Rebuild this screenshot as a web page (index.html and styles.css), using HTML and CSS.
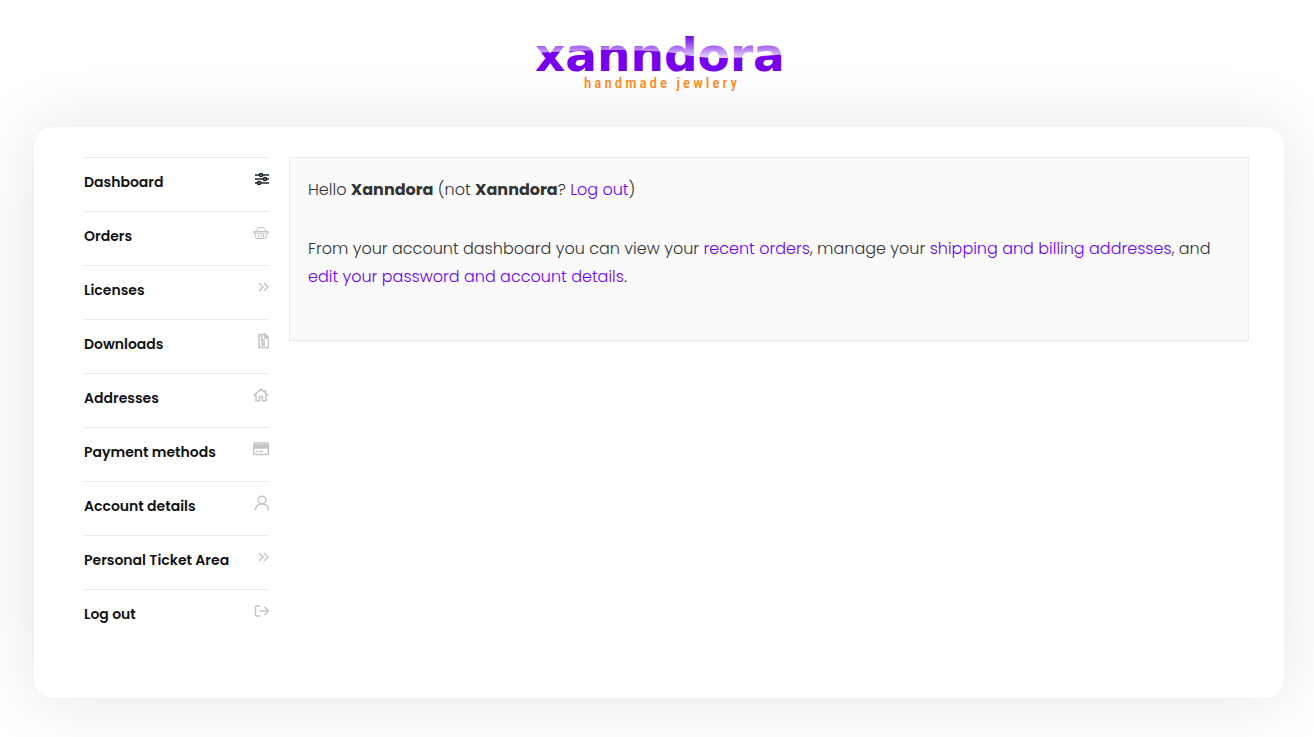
FILE: index.html
```html
<!DOCTYPE html>
<html lang="en">
<head>
    <meta charset="UTF-8">
    <meta name="viewport" content="width=device-width, initial-scale=1.0">
    <title>My account - Xanndora</title>
    <link rel="stylesheet" href="styles.css">
</head>
<body>
    <header class="site-header">
        <a href="#" class="logo" aria-label="Xanndora handmade jewlery">
            <svg width="270" height="70" viewBox="-10 -10 270 70">
                <defs>
                    <linearGradient id="gloss" gradientUnits="userSpaceOnUse" x1="0" y1="2" x2="0" y2="25">
                        <stop offset="0" stop-color="#7600ec"/>
                        <stop offset="0.35" stop-color="#9544f0"/>
                        <stop offset="1" stop-color="#ead8fc"/>
                    </linearGradient>
                    <pattern id="logoFill" patternUnits="userSpaceOnUse" x="0" y="0" width="260" height="60">
                        <path fill="#7600ec" d="M0 0h260v60H0z"/>
                        <path fill="url(#gloss)" d="M0 0H260V21C235 22 215 25 190 25C150 25 150 19 115 18C80 16 55 17 0 20Z"/>
                    </pattern>
                </defs>
                <text class="logo-name" x="1" y="38">xanndora</text>
                <text class="logo-tag" x="50" y="55">handmade jewlery</text>
            </svg>
        </a>
    </header>

    <main class="account">
        <nav class="account-nav" aria-label="Account pages">
            <ul>
                <li>
                    <a href="#" class="active">Dashboard
                        <svg class="icon" viewBox="0 0 16 16"><path d="M2 4h14M2 8h14M2 12h14"/><g fill="#8b939b"><circle cx="8" cy="4" r="1.6"/><circle cx="12" cy="8" r="1.6"/><circle cx="6" cy="12" r="1.6"/></g></svg>
                    </a>
                </li>
                <li>
                    <a href="#">Orders
                        <svg class="icon thin" viewBox="0 0 16 16"><path d="M.5 6.5h15v1.5H.5zM2 8l1 5.500h10L14 8M3 6.500L5.500 2.500h5L13 6.500M5.500 8.500v4M8 8.500v4M10.500 8.500v4"/></svg>
                    </a>
                </li>
                <li>
                    <a href="#">Licenses
                        <svg class="icon" viewBox="0 0 16 16"><path d="M6 4l4 4-4 4M11 4l4 4-4 4"/></svg>
                    </a>
                </li>
                <li>
                    <a href="#">Downloads
                        <svg class="icon" viewBox="0 0 16 16"><path d="M6 1.500h6l3.500 3.500v9.500H6zM9 2v5"/><path d="M9 7h2v5H9z"/><path d="M12 1l4 4h-4z" fill="currentColor"/></svg>
                    </a>
                </li>
                <li>
                    <a href="#">Addresses
                        <svg class="icon" viewBox="0 0 16 16"><path d="M.7 8.500L8 2.300l7.300 6.200M12.500 3v3M3 7.500v6.300h3.500V9.500h3v4.300H13V7.500"/></svg>
                    </a>
                </li>
                <li>
                    <a href="#">Payment methods
                        <svg class="icon" viewBox="0 0 16 16"><rect x=".7" y="2" width="14.600" height="11.500" rx="1"/><path d="M1 4h14v3H1z" fill="currentColor"/><path d="M3 10.500h2M6 10.500h4"/></svg>
                    </a>
                </li>
                <li>
                    <a href="#">Account details
                        <svg class="icon" viewBox="0 0 16 16"><circle cx="9" cy="5" r="3.800"/><path d="M2.500 15.500c0-4 2.500-6.500 6.500-6.500s6.500 2.500 6.500 6.500"/></svg>
                    </a>
                </li>
                <li>
                    <a href="#">Personal Ticket Area
                        <svg class="icon" viewBox="0 0 16 16"><path d="M6 4l4 4-4 4M11 4l4 4-4 4"/></svg>
                    </a>
                </li>
                <li>
                    <a href="#">Log out
                        <svg class="icon" viewBox="0 0 16 16"><path d="M7 3H4Q2.500 3 2.500 4.500v7Q2.500 13 4 13h3M6.500 8h9M11.500 4l4 4-4 4"/></svg>
                    </a>
                </li>
            </ul>
        </nav>

        <section class="account-content">
            <p>Hello <strong>Xanndora</strong> (not <strong>Xanndora</strong>? <a href="#">Log out</a>)</p>
            <p>From your account dashboard you can view your <a href="#">recent orders</a>, manage your <a href="#">shipping and billing addresses</a>, and <a href="#">edit your password and account details</a>.</p>
        </section>
    </main>
</body>
</html>
```
FILE: styles.css
```css
* {
    box-sizing: border-box;
}
body {
    margin: 0;
    padding: 0 30px 39px 34px;
    font-family: Poppins, Inter, sans-serif;
    font-size: 16px;
    font-weight: 300;
    line-height: 28px;
    color: #333;
    background: #fff;
}
a {
    color: #6c00f0;
    text-decoration: none;
}

/* Logo */
.site-header {
    display: flex;
    justify-content: center;
    padding: 23px 0 34px;
}
.logo {
    display: flex;
}
.logo-name {
    font-family: "DejaVu Sans", sans-serif;
    font-size: 47px;
    font-weight: bold;
    fill: url(#logoFill);
}
.logo-tag {
    font-family: "Roboto Condensed", "Liberation Sans Narrow", Roboto, sans-serif;
    font-size: 15px;
    font-weight: 500;
    letter-spacing: 3px;
    fill: #f98b1d;
}

/* Account card */
.account {
    display: flex;
    align-items: flex-start;
    gap: 20px;
    padding: 30px 35px 55px 50px;
    background: #fff;
    border-radius: 20px;
    box-shadow: 0 0 70px rgba(0, 0, 0, 0.11);
}
.account-nav {
    flex: 0 0 185px;
}
.account-nav ul {
    margin: 0;
    padding: 0;
    list-style: none;
}
.account-nav a {
    display: flex;
    justify-content: space-between;
    align-items: flex-start;
    padding: 13px 0 18px;
    border-top: 1px solid #ebebeb;
    font-size: 14px;
    font-weight: 600;
    line-height: 22px;
    white-space: nowrap;
    color: #111;
}
.icon {
    flex: none;
    width: 16px;
    height: 16px;
    fill: none;
    stroke: currentColor;
    stroke-width: 1.5;
    color: #c4c4c4;
}
.icon.thin {
    stroke-width: 1;
}
.active .icon {
    color: #1c2630;
}
.account-content {
    flex: 1;
    padding: 18px;
    background: #fafafa;
    border: 1px solid #ebebeb;
}
.account-content p {
    margin: 0 0 31px;
}
.account-content strong {
    font-weight: 700;
}
```
